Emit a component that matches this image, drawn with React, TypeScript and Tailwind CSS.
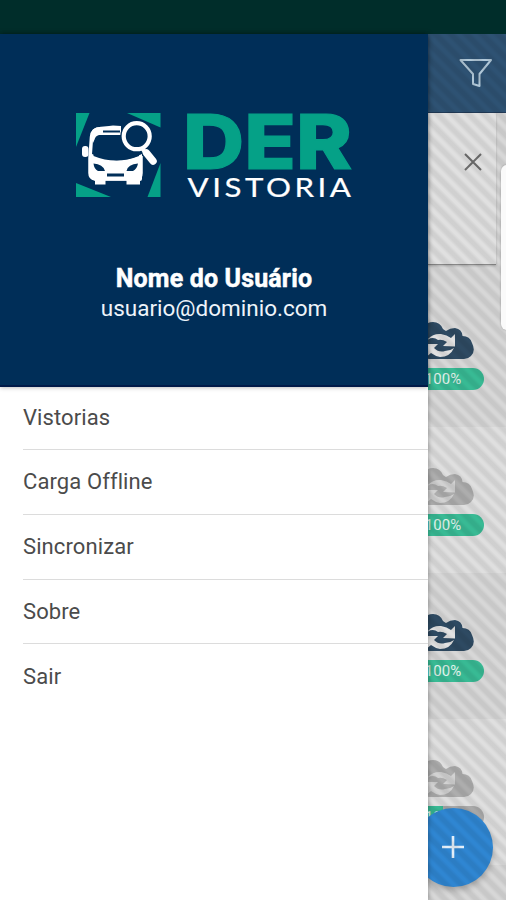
import React from "react";

const menu = ["Vistorias", "Carga Offline", "Sincronizar", "Sobre", "Sair"];

function Logo() {
  return (
    <svg width="290" height="94" viewBox="69 106 290 94" className="block overflow-visible" aria-label="DER Vistoria">
      <g fill="#05a187">
        <path d="M76 113H89.500L76 147Z" />
        <path d="M127 113H160.500V127.500Z" />
        <path d="M160.500 163V197H147.500Z" />
        <path d="M76 183L111 197H76Z" />
      </g>
      <path d="M121 128.500H101Q92 129 91.500 137L90 158V173Q90 178 95 179H137Q141 178 141 173V156" fill="none" stroke="#fff" strokeWidth="3.500" />
      <path d="M90 153Q116 167 142 154V179Q142 181 140 181V184.500H126.500V180.500H105.500V184.500H95V180.500Q89 179 89 173Z" fill="#fff" />
      <path d="M91 134Q92 127 101 127L113 125.500L121 126V137H100Q95 137 93 143Z" fill="#fff" />
      <path d="M103 131.500H120" stroke="#002e58" strokeWidth="2" />
      <path d="M121 135H99Q95 136 94.500 140L93.500 156Q116 165 139 156V137Z" fill="#002e58" />
      <rect x="82" y="146" width="6.500" height="11" rx="3" fill="#fff" />
      <path d="M93.500 163.500Q103 164 105 171H98Q94 169 93.500 163.500ZM138 163.500Q128 164 126.500 171H133Q137 169 138 163.500ZM107 173.500H124V176.500H107Z" fill="#002e58" />
      <circle cx="136.700" cy="136.200" r="16.500" fill="#002e58" />
      <circle cx="136.700" cy="136.200" r="13" fill="#002e58" stroke="#fff" strokeWidth="4.200" />
      <path d="M142 148L147 155" stroke="#fff" strokeWidth="4" />
      <path d="M146.500 153L153 161" stroke="#fff" strokeWidth="7.500" strokeLinecap="round" />
      <text x="183" y="168.500" fontSize="76" fontWeight="800" textLength="169" lengthAdjust="spacingAndGlyphs" fill="#05a187" stroke="#05a187" strokeWidth="1.200" className="font-['Inter',sans-serif]">DER</text>
      <text x="187.500" y="197" fontSize="26.500" letterSpacing="3" textLength="167" lengthAdjust="spacingAndGlyphs" fill="#fff" stroke="#fff" strokeWidth=".2" className="font-['Lato',sans-serif]">VISTORIA</text>
    </svg>
  );
}

function SyncRow({ dark, synced, className }: { dark: boolean; synced: boolean; className: string }) {
  return (
    <div className={`h-[146px] shrink-0 pt-[41px] ${className}`}>
      <div className="-ml-[26px] flex w-[82px] flex-col items-center">
        <svg width="56" height="38" viewBox="0 0 56 38" className="ml-2 block">
          <path d="M10 37Q0 36 0 26Q0 17 6 14Q3 0 14 0Q21 0 24 7Q27 9 27 9Q31 6 36 6Q43 7 43.500 14Q51 14 53 21Q57 29 52 34Q49 37 45 37Z" fill={dark ? "#2e4a62" : "#adadad"} />
          <g fill={dark ? "#e2e2e2" : "#d2d2d2"}>
            <path d="M8 18Q14 11 22 12Q28 13 32 16L36 12V24.500L24 24L28 20Q23 17 19 18Q14 14 8 18Z" />
            <path d="M35 26Q31 35 21 35Q16 34 12 31L7 35V22H19L15 26Q20 31 26 29Q31 29 35 26Z" />
          </g>
        </svg>
        <div className={`mt-2 flex h-[22px] w-full items-center justify-center rounded-full pt-px text-[15px] text-[#e2f3ed] ${synced ? "bg-[#38ba94]" : "bg-gradient-to-r from-[#38ba94] from-50% to-[#ababab] to-50%"}`}>
          100%
        </div>
      </div>
    </div>
  );
}

export default function App() {
  return (
    <div className="flex h-[900px] w-[506px] flex-col overflow-hidden font-['Roboto',sans-serif]">
      <div className="h-[34px] shrink-0 bg-[#002d2a]" />
      <div className="flex min-h-0 flex-1">
        <aside className="z-10 flex w-[428px] shrink-0 flex-col bg-white shadow-[0_0_5px_rgba(0,0,0,0.35)]">
          <header className="flex h-[353px] shrink-0 flex-col items-center border-b-2 border-[#001a48] bg-[#002e58] pt-[72px] text-white shadow-[0_1px_4px_rgba(0,0,0,0.25)]">
            <Logo />
            <div className="mt-[64px] text-[25px] leading-[30px] font-bold tracking-[0.150px] [-webkit-text-stroke:0.500px_white]">Nome do Usuário</div>
            <div className="text-[22.500px] leading-[28px] text-[#eef4fa]">usuario@dominio.com</div>
          </header>
          <nav className="flex flex-col pl-[23px]">
            {menu.map((item, i) => (
              <a
                key={item}
                className={`flex items-center text-[22px] tracking-[0.100px] text-[#4b4b4b] ${i === 0 ? "h-[63px] pb-[1px]" : "h-[64.800px]"} ${i < 4 ? "border-b-[1.500px] border-[#dcdcdc]" : ""}`}
              >
                {item}
              </a>
            ))}
          </nav>
        </aside>
        <main className="relative flex w-[78px] shrink-0 flex-col overflow-hidden bg-[#d7d7d7]">
          <div className="flex h-[79px] shrink-0 items-center border-b border-[#223b58] bg-[#2e5273] pl-[31px]">
            <svg width="34" height="32" viewBox="0 0 34 32" fill="none" stroke="#b1c8d8" strokeWidth="2" strokeLinejoin="round">
              <path d="M1.500 3H32L20.500 17V29L14 27V17Z" />
            </svg>
          </div>
          <div className="mr-[10px] h-[152px] shrink-0 border-b border-[#888] bg-[#e0e0e0] pt-[39px] pl-[35px] shadow-[0_1px_2px_rgba(0,0,0,0.200)]">
            <svg width="20" height="20" viewBox="0 0 20 20" stroke="#6c6c6c" strokeWidth="2">
              <path d="M2 2L18 18M18 2L2 18" />
            </svg>
          </div>
          <div className="h-4 shrink-0" />
          <SyncRow dark synced className="bg-[#d7d7d7]" />
          <SyncRow dark={false} synced className="bg-[#dfdfdf]" />
          <SyncRow dark synced className="bg-[#d7d7d7]" />
          <SyncRow dark={false} synced={false} className="bg-[#dfdfdf]" />
          <button className="absolute top-[774px] -left-[14px] flex size-[79px] items-center justify-center rounded-full bg-[#2f86d2] shadow-[0_3px_6px_rgba(0,0,0,0.250)]">
            <svg width="24" height="24" viewBox="0 0 24 24" stroke="#e4eff9" strokeWidth="2.600" className="-ml-px -mt-px">
              <path d="M12 1V23M1 12H23" />
            </svg>
          </button>
          <div className="pointer-events-none absolute inset-0 bg-[repeating-linear-gradient(45deg,rgba(0,0,0,0.070)_0px,rgba(0,0,0,0.070)_3px,rgba(0,0,0,0)_6px,rgba(0,0,0,0)_8px,rgba(0,0,0,0.070)_11px)]" />
          <div className="absolute top-[131px] left-[73px] h-[165px] w-3 rounded-l-md bg-[#fafafa] shadow-[0_0_2px_rgba(0,0,0,0.300)]" />
        </main>
      </div>
    </div>
  );
}
